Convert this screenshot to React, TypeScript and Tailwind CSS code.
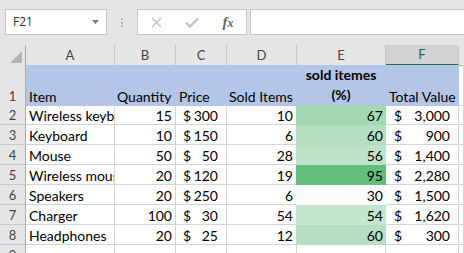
import React from 'react';

const COLS = 'grid grid-cols-[26px_89px_61px_51px_70px_89px_73px_1fr]';
const GRID = 'border-r border-b border-r-[#d4d4d4] border-b-[#d4d4d4]';
const ROWHEAD =
  'flex items-end justify-center border-r border-b border-r-[#ababab] border-b-[#c8c8c8] bg-[#e6e6e6] pb-[1px] text-[13px] leading-[16px] text-[#444]';

const rows = [
  { n: 2, item: 'Wireless keyboard', qty: '15', price: '300', sold: '10', pct: '67', total: '3,000', fill: 'bg-[#a5d9b4] border-r-[#a5d9b4] border-b-[#a5d9b4]', dEdge: 'border-r-[#a5d9b4]' },
  { n: 3, item: 'Keyboard', qty: '10', price: '150', sold: '6', pct: '60', total: '900', fill: 'bg-[#b5dfc2] border-r-[#b5dfc2] border-b-[#b5dfc2]', dEdge: 'border-r-[#b5dfc2]' },
  { n: 4, item: 'Mouse', qty: '50', price: '50', sold: '28', pct: '56', total: '1,400', fill: 'bg-[#bfe3ca] border-r-[#bfe3ca] border-b-[#bfe3ca]', dEdge: 'border-r-[#bfe3ca]' },
  { n: 5, item: 'Wireless mouse', qty: '20', price: '120', sold: '19', pct: '95', total: '2,280', fill: 'bg-[#63be7b] border-r-[#63be7b] border-b-[#63be7b]', dEdge: 'border-r-[#63be7b]' },
  { n: 6, item: 'Speakers', qty: '20', price: '250', sold: '6', pct: '30', total: '1,500', fill: 'bg-[#fcfcff] border-r-[#fcfcff] border-b-[#fcfcff]', dEdge: 'border-r-[#fcfcff]' },
  { n: 7, item: 'Charger', qty: '100', price: '30', sold: '54', pct: '54', total: '1,620', fill: 'bg-[#c4e5ce] border-r-[#c4e5ce] border-b-[#c4e5ce]', dEdge: 'border-r-[#c4e5ce]' },
  { n: 8, item: 'Headphones', qty: '20', price: '25', sold: '12', pct: '60', total: '300', fill: 'bg-[#b5dfc2] border-r-[#b5dfc2] border-b-[#b5dfc2]', dEdge: 'border-r-[#b5dfc2]' },
];

function FormulaBar() {
  return (
    <div className="flex h-[45px] items-start pt-[9px]">
      <div className="ml-[5px] flex h-[26px] w-[102px] items-center justify-between border border-[#c6c6c6] bg-white pl-[7px] pr-[7px]">
        <span className="font-['Open_Sans',sans-serif] text-[12px] text-[#333]">F21</span>
        <svg width="7" height="4" viewBox="0 0 7 4">
          <path d="M0 0h7L3.5 4z" fill="#7a7a7a" />
        </svg>
      </div>
      <div className="flex w-[30px] flex-col items-center gap-[1.5px] pt-[9px]">
        <span className="h-[2px] w-[2px] bg-[#b5b5b5]" />
        <span className="h-[2px] w-[2px] bg-[#b5b5b5]" />
        <span className="h-[2px] w-[2px] bg-[#b5b5b5]" />
      </div>
      <div className="flex h-[26px] w-[110px] items-center border border-[#c6c6c6] bg-white">
        <div className="flex w-[36px] justify-center">
          <svg width="11" height="11" viewBox="0 0 11 11">
            <path d="M1 1l9 9M10 1l-9 9" stroke="#c2c2c2" strokeWidth="1.4" />
          </svg>
        </div>
        <div className="flex w-[36px] justify-center">
          <svg width="14" height="11" viewBox="0 0 14 11">
            <path d="M1 5.5l4 4L13 1.5" stroke="#c2c2c2" strokeWidth="2.4" fill="none" />
          </svg>
        </div>
        <div className="flex w-[36px] justify-center">
          <span className="font-['Liberation_Serif',serif] text-[15px] font-bold italic leading-none text-[#666]">
            f<span className="text-[12px]">x</span>
          </span>
        </div>
      </div>
      <div className="ml-[3px] h-[26px] flex-1 border border-r-0 border-[#c6c6c6] bg-white" />
    </div>
  );
}

function ColumnHeaders() {
  return (
    <div className={`${COLS} h-[20px]`}>
      <div className="flex items-end justify-end border-r border-b border-[#ababab] pr-[3px] pb-[2px]">
        <svg width="12" height="12" viewBox="0 0 12 12">
          <polygon points="12,0 12,12 0,12" fill="#b4b4b4" />
        </svg>
      </div>
      {['A', 'B', 'C', 'D', 'E'].map((l) => (
        <div
          key={l}
          className="flex items-center justify-center border-r border-b border-r-[#c6c6c6] border-b-[#ababab] text-[13px] leading-[19px] text-[#444]"
        >
          {l}
        </div>
      ))}
      <div className="flex items-center justify-center border-r border-b-2 border-r-[#c6c6c6] border-b-[#217346] bg-[#d2d2d2] text-[13px] leading-[19px] text-[#1d6b3a]">
        F
      </div>
      <div className="border-b border-b-[#ababab]" />
    </div>
  );
}

export default function App() {
  const blue = 'border-r border-b border-[#b4c6e7] bg-[#b4c6e7] flex items-end leading-[16px] whitespace-nowrap';
  return (
    <div className="h-[253px] w-[464px] overflow-hidden bg-[#e6e6e6] font-['Lato',sans-serif] text-[14px] text-black">
      <FormulaBar />
      <ColumnHeaders />

      <div className={`${COLS} h-[40px] bg-white`}>
        <div className={ROWHEAD}>1</div>
        <div className={`${blue} pl-[3px]`}>Item</div>
        <div className={`${blue} pl-[2px]`}>Quantity</div>
        <div className={`${blue} pl-[3px]`}>Price</div>
        <div className={`${blue} pl-[2px]`}>Sold Items</div>
        <div className="flex items-end justify-center border-r border-b border-[#b4c6e7] bg-[#b4c6e7] text-center font-bold leading-[20px]">
          sold itemes
          <br />
          (%)
        </div>
        <div className={`${blue} pl-[3px]`}>Total Value</div>
        <div className={GRID} />
      </div>

      {rows.map((r) => (
        <div key={r.n} className={`${COLS} h-[20px] bg-white leading-[16px]`}>
          <div className={ROWHEAD}>{r.n}</div>
          <div className={`${GRID} flex items-end overflow-hidden whitespace-nowrap pl-[3px]`}>{r.item}</div>
          <div className={`${GRID} flex items-end justify-end pr-[3px]`}>{r.qty}</div>
          <div className={`${GRID} flex items-end justify-between pl-[7px] pr-[8px]`}>
            <span>$</span>
            <span>{r.price}</span>
          </div>
          <div className={`border-r border-b border-b-[#d4d4d4] ${r.dEdge} flex items-end justify-end pr-[3px]`}>{r.sold}</div>
          <div className={`border-r border-b ${r.fill} flex items-end justify-end pr-[2px]`}>{r.pct}</div>
          <div className={`${GRID} flex items-end justify-between pl-[8px] pr-[8px]`}>
            <span>$</span>
            <span>{r.total}</span>
          </div>
          <div className={GRID} />
        </div>
      ))}

      <div className={`${COLS} h-[20px] bg-white`}>
        <div className={ROWHEAD}>9</div>
        <div className={GRID} />
        <div className={GRID} />
        <div className={GRID} />
        <div className={GRID} />
        <div className={GRID} />
        <div className={GRID} />
        <div className={GRID} />
      </div>
    </div>
  );
}
